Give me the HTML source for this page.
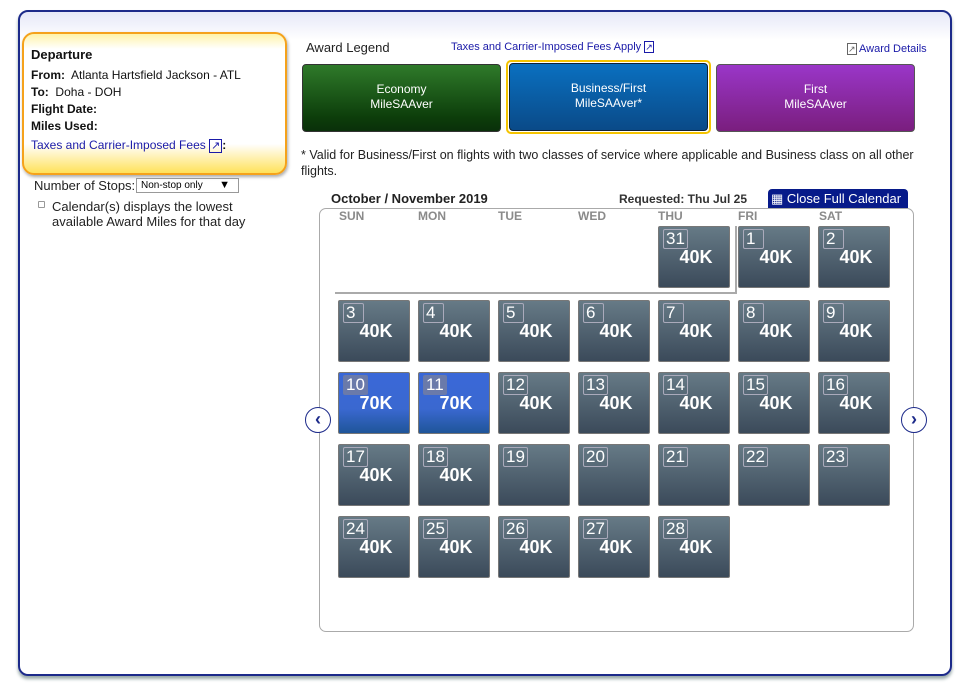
<!DOCTYPE html>
<html><head><style>
body{margin:0;width:962px;height:688px;background:#fff;font-family:"Liberation Sans",Arial,sans-serif;position:relative;overflow:hidden}
.a{position:absolute}
#outer{left:18px;top:10px;width:930px;height:662px;border:2px solid #1c2a8a;border-radius:10px;background:linear-gradient(#e6e8f8 0,#fff 28px);box-shadow:0 3px 3px #9aa}
#dep{left:22px;top:32px;width:261px;height:139px;border:2px solid #f5a21b;border-radius:12px;background:linear-gradient(#fff3a8 0,#fff 15px,#fff 110px,#ffe25a 139px);font-size:12px;color:#111;box-shadow:1px 2px 3px #aaa}
#dep div{position:absolute;left:7px}
b{font-weight:bold}
.leg{font-size:12px;color:#fff;text-align:center;line-height:15px;border-radius:4px}
.cell{position:absolute;width:70px;height:60px;border:1px solid #777;border-radius:2px;background:linear-gradient(#667a86,#3b4a5a);color:#fff}
.cell .d{position:absolute;left:4px;top:2px;border:1px solid #aab;border-radius:2px;font-size:17px;line-height:18px;padding:0 2px;min-width:15px}
.cell .m{position:absolute;left:2px;width:100%;text-align:center;top:20px;font-size:18px;font-weight:bold}
.blue{background:linear-gradient(#3a68d8 0,#3a68d0 60%,#1f5599)}
.blue .d{background:#6a7aaa;border-color:#6a7aaa}
.hd{position:absolute;top:209px;font-size:12px;font-weight:bold;color:#8a8a8a}
.arr{width:24px;height:24px;border:1px solid #1c2a8a;border-radius:50%;background:#fff;color:#1c2a8a;font-weight:bold;font-size:18px;text-align:center;line-height:23px}
</style></head><body>
<div class="a" id="outer"></div>
<div class="a" id="dep">
<div style="top:13px;font-weight:bold;font-size:13px">Departure</div>
<div style="top:34px"><b>From:</b>&nbsp; Atlanta Hartsfield Jackson - ATL</div>
<div style="top:51px"><b>To:</b>&nbsp; Doha - DOH</div>
<div style="top:68px"><b>Flight Date:</b></div>
<div style="top:85px"><b>Miles Used:</b></div>
<div style="top:104px;color:#1a1aa8">Taxes and Carrier-Imposed Fees <span style="font-size:11px;border:1px solid #1a1aa8;padding:0 1px">↗</span><b style="color:#111">:</b></div>
</div>
<div class="a" style="left:34px;top:178px;font-size:13px;color:#222">Number of Stops:</div>
<div class="a" style="left:136px;top:178px;width:97px;height:13px;border:1px solid #999;font-size:10px;line-height:13px;padding-left:4px">Non-stop only<span style="position:absolute;right:8px;font-size:11px">▼</span></div>
<div class="a" style="left:38px;top:201px;width:5px;height:5px;border:1px solid #999;border-radius:1px"></div>
<div class="a" style="left:52px;top:199px;font-size:13px;color:#222;line-height:15px">Calendar(s) displays the lowest<br>available Award Miles for that day</div>

<div class="a" style="left:306px;top:40px;font-size:13px;color:#222">Award Legend</div>
<div class="a" style="left:451px;top:41px;font-size:11px;color:#1a1aa8">Taxes and Carrier-Imposed Fees Apply <span style="border:1px solid #1a1aa8;font-size:9px">↗</span></div>
<div class="a" style="left:847px;top:43px;font-size:11px;color:#1a1aa8"><span style="border:1px solid #666;font-size:9px;color:#666">↗</span> Award Details</div>
<div class="a leg" style="left:302px;top:64px;width:197px;height:66px;border:1px solid #333;background:linear-gradient(#2f7a2a,#0c3d0a 80%,#0a300a)"><div style="padding-top:17px">Economy<br>MileSAAver</div></div>
<div class="a" style="left:506px;top:60px;width:201px;height:70px;border:2px solid #f5c400;border-radius:5px"></div>
<div class="a leg" style="left:509px;top:63px;width:197px;height:66px;border:1px solid #123;background:linear-gradient(#0a70c0,#0a4a88)"><div style="padding-top:17px">Business/First<br>MileSAAver*</div></div>
<div class="a leg" style="left:716px;top:64px;width:197px;height:66px;border:1px solid #555;background:linear-gradient(#9a36c8,#7a1e7e)"><div style="padding-top:17px">First<br>MileSAAver</div></div>
<div class="a" style="left:301px;top:147px;width:650px;font-size:12.5px;color:#222;line-height:16px;white-space:nowrap">* Valid for Business/First on flights with two classes of service where applicable and Business class on all other<br>flights.</div>

<div class="a" style="left:331px;top:191px;font-size:13px;font-weight:bold;color:#222">October / November 2019</div>
<div class="a" style="left:619px;top:192px;font-size:12px;font-weight:bold;color:#333">Requested: Thu Jul 25</div>
<div class="a" style="left:768px;top:189px;width:137px;height:19px;background:#071a8a;border-radius:4px 4px 0 0;color:#fff;font-size:13px;line-height:19px;padding-left:3px">▦ Close Full Calendar</div>
<div class="a" style="left:319px;top:208px;width:593px;height:422px;border:1px solid #aaa;border-radius:7px"></div>
<div class="hd" style="left:339px">SUN</div><div class="hd" style="left:418px">MON</div><div class="hd" style="left:498px">TUE</div><div class="hd" style="left:578px">WED</div><div class="hd" style="left:658px">THU</div><div class="hd" style="left:738px">FRI</div><div class="hd" style="left:819px">SAT</div>
<div class="a" style="left:335px;top:292px;width:402px;height:2px;background:#aaa"></div>
<div class="a" style="left:735px;top:226px;width:2px;height:68px;background:#aaa"></div>
<div class="a arr" style="left:305px;top:407px">‹</div>
<div class="a arr" style="left:901px;top:407px">›</div>

<div class="cell" style="left:658px;top:226px"><span class="d">31</span><span class="m">40K</span></div>
<div class="cell" style="left:738px;top:226px"><span class="d">1</span><span class="m">40K</span></div>
<div class="cell" style="left:818px;top:226px"><span class="d">2</span><span class="m">40K</span></div>

<div class="cell" style="left:338px;top:300px"><span class="d">3</span><span class="m">40K</span></div>
<div class="cell" style="left:418px;top:300px"><span class="d">4</span><span class="m">40K</span></div>
<div class="cell" style="left:498px;top:300px"><span class="d">5</span><span class="m">40K</span></div>
<div class="cell" style="left:578px;top:300px"><span class="d">6</span><span class="m">40K</span></div>
<div class="cell" style="left:658px;top:300px"><span class="d">7</span><span class="m">40K</span></div>
<div class="cell" style="left:738px;top:300px"><span class="d">8</span><span class="m">40K</span></div>
<div class="cell" style="left:818px;top:300px"><span class="d">9</span><span class="m">40K</span></div>

<div class="cell blue" style="left:338px;top:372px"><span class="d">10</span><span class="m">70K</span></div>
<div class="cell blue" style="left:418px;top:372px"><span class="d">11</span><span class="m">70K</span></div>
<div class="cell" style="left:498px;top:372px"><span class="d">12</span><span class="m">40K</span></div>
<div class="cell" style="left:578px;top:372px"><span class="d">13</span><span class="m">40K</span></div>
<div class="cell" style="left:658px;top:372px"><span class="d">14</span><span class="m">40K</span></div>
<div class="cell" style="left:738px;top:372px"><span class="d">15</span><span class="m">40K</span></div>
<div class="cell" style="left:818px;top:372px"><span class="d">16</span><span class="m">40K</span></div>

<div class="cell" style="left:338px;top:444px"><span class="d">17</span><span class="m">40K</span></div>
<div class="cell" style="left:418px;top:444px"><span class="d">18</span><span class="m">40K</span></div>
<div class="cell" style="left:498px;top:444px"><span class="d">19</span></div>
<div class="cell" style="left:578px;top:444px"><span class="d">20</span></div>
<div class="cell" style="left:658px;top:444px"><span class="d">21</span></div>
<div class="cell" style="left:738px;top:444px"><span class="d">22</span></div>
<div class="cell" style="left:818px;top:444px"><span class="d">23</span></div>

<div class="cell" style="left:338px;top:516px"><span class="d">24</span><span class="m">40K</span></div>
<div class="cell" style="left:418px;top:516px"><span class="d">25</span><span class="m">40K</span></div>
<div class="cell" style="left:498px;top:516px"><span class="d">26</span><span class="m">40K</span></div>
<div class="cell" style="left:578px;top:516px"><span class="d">27</span><span class="m">40K</span></div>
<div class="cell" style="left:658px;top:516px"><span class="d">28</span><span class="m">40K</span></div>
</body></html>
